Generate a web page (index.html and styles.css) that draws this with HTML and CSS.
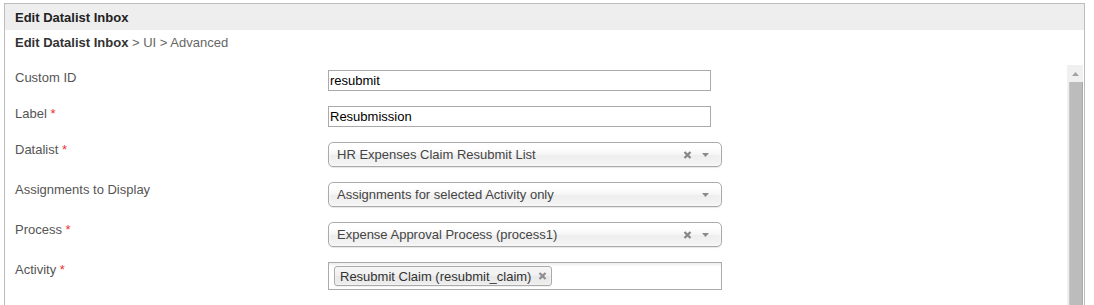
FILE: index.html
```html
<!DOCTYPE html>
<html lang="en">

<head>
  <meta charset="UTF-8">
  <meta name="viewport" content="width=device-width, initial-scale=1.0">
  <title>Edit Datalist Inbox</title>
  <link rel="stylesheet" href="styles.css">
</head>

<body>
  <div class="frame">
    <div class="frame-header">Edit Datalist Inbox</div>
    <div class="breadcrumb"><b>Edit Datalist Inbox</b> &gt; UI &gt; Advanced</div>

    <div class="frame-body">
      <div class="form">
        <div class="form-row">
          <label class="form-label">Custom ID</label>
          <input type="text" class="text-input" value="resubmit">
        </div>
        <div class="form-row">
          <label class="form-label">Label <span class="required">*</span></label>
          <input type="text" class="text-input" value="Resubmission">
        </div>
        <div class="form-row">
          <label class="form-label">Datalist <span class="required">*</span></label>
          <div class="chosen-single">
            <span class="chosen-text">HR Expenses Claim Resubmit List</span>
            <svg class="chosen-clear" width="9" height="8" viewBox="0 0 9 8"><path d="M1.5 1L7.5 7M7.5 1L1.5 7" stroke="#878787" stroke-width="2.3"/></svg>
            <svg class="chosen-arrow" width="7" height="4" viewBox="0 0 7 4"><path d="M0 0H7L3.5 4Z" fill="#8a8a8a"/></svg>
          </div>
        </div>
        <div class="form-row">
          <label class="form-label">Assignments to Display</label>
          <div class="chosen-single">
            <span class="chosen-text">Assignments for selected Activity only</span>
            <svg class="chosen-arrow" width="7" height="4" viewBox="0 0 7 4"><path d="M0 0H7L3.5 4Z" fill="#8a8a8a"/></svg>
          </div>
        </div>
        <div class="form-row">
          <label class="form-label">Process <span class="required">*</span></label>
          <div class="chosen-single">
            <span class="chosen-text">Expense Approval Process (process1)</span>
            <svg class="chosen-clear" width="9" height="8" viewBox="0 0 9 8"><path d="M1.5 1L7.5 7M7.5 1L1.5 7" stroke="#878787" stroke-width="2.3"/></svg>
            <svg class="chosen-arrow" width="7" height="4" viewBox="0 0 7 4"><path d="M0 0H7L3.5 4Z" fill="#8a8a8a"/></svg>
          </div>
        </div>
        <div class="form-row">
          <label class="form-label">Activity <span class="required">*</span></label>
          <div class="chosen-multi">
            <span class="choice">
              Resubmit Claim (resubmit_claim)
              <svg width="9" height="8" viewBox="0 0 9 8"><path d="M1.5 1L7.5 7M7.5 1L1.5 7" stroke="#8f8f8f" stroke-width="2.3"/></svg>
            </span>
          </div>
        </div>
      </div>

      <div class="scrollbar">
        <div class="scroll-arrow">
          <svg width="7" height="4" viewBox="0 0 7 4"><path d="M0 4H7L3.5 0Z" fill="#a3a3a3"/></svg>
        </div>
        <div class="scroll-thumb"></div>
      </div>
    </div>
  </div>
</body>

</html>
```

FILE: styles.css
```css
html, body {
  margin: 0;
  padding: 0;
  height: 100%;
  overflow: hidden;
  background-color: white;
}

body {
  font-family: 'Liberation Sans', Arial, sans-serif;
  font-size: 13px;
  line-height: 15px;
  color: #555;
  padding-top: 3px;
  box-sizing: border-box;
}

.frame {
  margin: 0 9px 0 4px;
  border: 1px solid #bdbdbd;
  border-bottom: none;
  height: 100%;
  box-sizing: border-box;
  display: flex;
  flex-direction: column;
}

.frame-header {
  background-color: #eee;
  color: #222;
  font-weight: bold;
  padding: 6px 10px 5px;
}

.breadcrumb {
  color: #666;
  padding: 5px 10px 15px;
}

.breadcrumb b {
  color: #333;
}

.frame-body {
  flex: 1;
  display: flex;
  min-height: 0;
  padding-right: 1px;
}

.form {
  flex: 1;
  display: flex;
  flex-direction: column;
  gap: 15px;
  padding: 5px 0 0 10px;
}

.form-row {
  display: flex;
  align-items: flex-start;
}

.form-label {
  width: 313px;
  flex-shrink: 0;
}

.required {
  color: #e33;
}

.text-input {
  width: 383px;
  height: 21px;
  box-sizing: border-box;
  margin: 0;
  padding: 0 1px;
  border: 1px solid #aaa;
  font-family: inherit;
  font-size: 13px;
  line-height: 15px;
  color: #000;
  outline: none;
}

.chosen-single {
  width: 394px;
  height: 25px;
  box-sizing: border-box;
  display: flex;
  align-items: center;
  padding: 0 12px 0 8px;
  border: 1px solid #aaa;
  border-radius: 5px;
  background: linear-gradient(#fff 20%, #f6f6f6 50%, #eee 52%, #f4f4f4 100%);
  box-shadow: inset 0 0 3px #fff, 0 1px 1px rgba(0, 0, 0, 0.1);
  color: #444;
  line-height: 23px;
}

.chosen-text {
  flex: 1;
}

.chosen-clear {
  margin-right: 10px;
}

.chosen-arrow {
  margin-top: 1px;
}

.chosen-multi {
  width: 394px;
  height: 28px;
  box-sizing: border-box;
  display: flex;
  align-items: center;
  padding: 0 5px;
  border: 1px solid #aaa;
  background: linear-gradient(#eee 1%, #fff 15%);
}

.choice {
  display: flex;
  align-items: center;
  gap: 7px;
  height: 20px;
  box-sizing: border-box;
  padding: 0 4px 0 5px;
  border: 1px solid #aaa;
  border-radius: 3px;
  background: linear-gradient(#f4f4f4 20%, #f0f0f0 50%, #e8e8e8 52%, #eee 100%);
  box-shadow: inset 0 0 2px #fff, 0 1px 0 rgba(0, 0, 0, 0.05);
  color: #333;
}

.scrollbar {
  width: 16px;
  background-color: #f0f0f0;
  display: flex;
  flex-direction: column;
}

.scroll-arrow {
  height: 17px;
  display: flex;
  align-items: center;
  justify-content: center;
}

.scroll-thumb {
  flex: 1;
  margin-left: 2px;
  background-color: #bcbcbc;
  border-left: 1px solid #c6c6c6;
  border-right: 1px solid #a9a9a9;
}
```
